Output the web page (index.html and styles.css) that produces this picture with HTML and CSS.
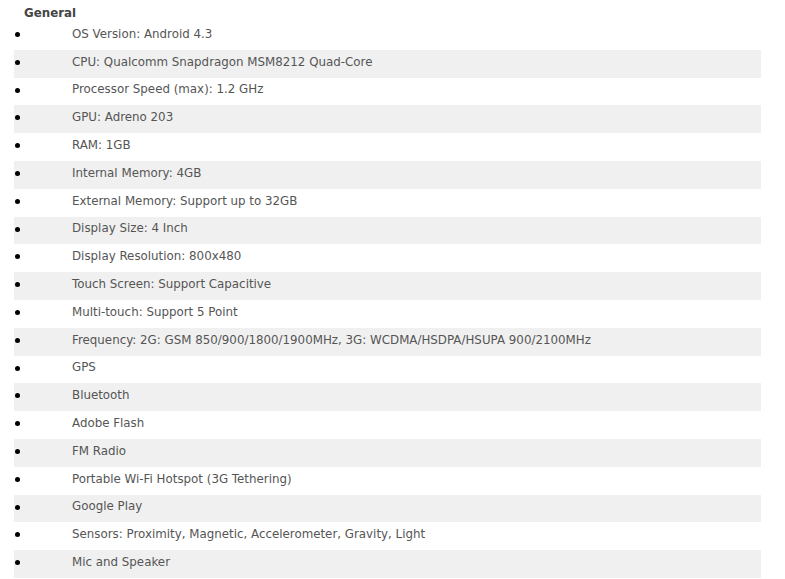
FILE: index.html
```html
<!DOCTYPE html>
<html>
<head>
<meta charset="utf-8">
<link rel="stylesheet" href="styles.css">
</head>
<body>
<div class="specs">
  <div class="heading">General</div>
  <ul class="list">
    <li class="row">OS Version: Android 4.3</li>
    <li class="row alt">CPU: Qualcomm Snapdragon MSM8212 Quad-Core</li>
    <li class="row">Processor Speed (max): 1.2 GHz</li>
    <li class="row alt">GPU: Adreno 203</li>
    <li class="row">RAM: 1GB</li>
    <li class="row alt">Internal Memory: 4GB</li>
    <li class="row">External Memory: Support up to 32GB</li>
    <li class="row alt">Display Size: 4 Inch</li>
    <li class="row">Display Resolution: 800x480</li>
    <li class="row alt">Touch Screen: Support Capacitive</li>
    <li class="row">Multi-touch: Support 5 Point</li>
    <li class="row alt">Frequency: 2G: GSM 850/900/1800/1900MHz, 3G: WCDMA/HSDPA/HSUPA 900/2100MHz</li>
    <li class="row">GPS</li>
    <li class="row alt">Bluetooth</li>
    <li class="row">Adobe Flash</li>
    <li class="row alt">FM Radio</li>
    <li class="row">Portable Wi-Fi Hotspot (3G Tethering)</li>
    <li class="row alt">Google Play</li>
    <li class="row">Sensors: Proximity, Magnetic, Accelerometer, Gravity, Light</li>
    <li class="row alt">Mic and Speaker</li>
  </ul>
</div>
</body>
</html>
```
FILE: styles.css
```css
html, body {
  margin: 0;
  padding: 0;
  background: #ffffff;
}
.specs {
  padding: 5px 0 0 14px;
  width: 747px;
  font-family: "DejaVu Sans", Verdana, sans-serif;
  font-size: 11.85px;
  color: #555555;
}
.heading {
  padding-left: 10px;
  height: 17px;
  line-height: 16px;
  font-weight: bold;
  color: #444444;
}
.list {
  list-style: none;
  margin: 0;
  padding: 0;
}
.row {
  display: flex;
  align-items: center;
  height: 27.8px;
  padding-left: 58px;
  padding-bottom: 4px;
  box-sizing: border-box;
  position: relative;
}
.row::before {
  content: "";
  position: absolute;
  left: 1px;
  top: 10px;
  width: 5px;
  height: 5px;
  border-radius: 50%;
  background: #000000;
}
.alt {
  background: #f0f0f0;
}
```
